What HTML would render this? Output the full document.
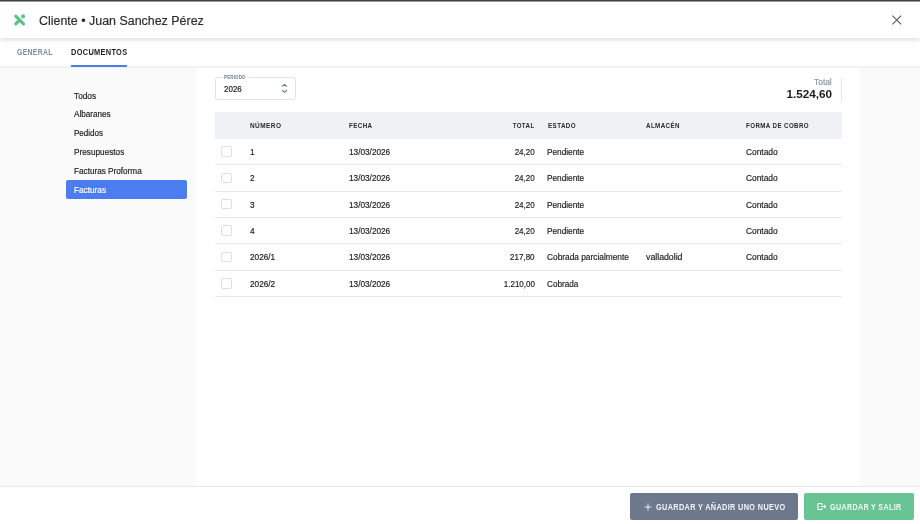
<!DOCTYPE html>
<html lang="es">
<head>
<meta charset="utf-8">
<title>Cliente • Juan Sanchez Pérez</title>
<style>
*{box-sizing:border-box;margin:0;padding:0}
html,body{width:920px;height:524px;overflow:hidden}
body{position:relative;background:#fafafa;font-family:"Liberation Sans",sans-serif;color:#222}
.a,.t{position:absolute;white-space:nowrap}
.t{line-height:1;display:block}
.n{-webkit-text-stroke:.18px currentColor}
#topline{left:0;top:0;width:920px;height:2px;background:linear-gradient(#383838 0,#4a4a4a 45%,#e0e0e0 100%);z-index:10}
#header{left:0;top:0;width:920px;height:38px;background:#fff;box-shadow:0 1px 5px rgba(90,100,120,.28);z-index:5}
#logo{left:13px;top:13px;width:14px;height:14px;z-index:6}
#close{left:890px;top:13px;width:14px;height:14px;z-index:6}
#tabs{left:0;top:38px;width:920px;height:30px;background:#fff;border-bottom:2px solid #f0f1f4;z-index:2}
#tabline{left:71px;top:64.5px;width:55.7px;height:2px;background:#4a7fe9;z-index:3}
#panel{left:196.2px;top:68px;width:664.1px;height:419px;background:#fff}
#sideactive{left:66.2px;top:180px;width:120.8px;height:19px;background:#4b7df0;border-radius:2px}
#sel{left:215.3px;top:77.2px;width:80.5px;height:22.4px;border:1px solid #dfe2e8;border-radius:2.5px;background:#fff}
#sellab{left:222.5px;top:75px;width:25px;height:5px;background:#fff}
#chev{left:280px;top:82px;width:9px;height:13px}
#tdiv{left:841px;top:77px;width:1px;height:25px;background:#e3e6eb}
#thead{left:215.2px;top:112px;width:626.4px;height:26.5px;background:#f0f1f4}
.rl{left:215.2px;width:626.4px;height:1px;background:#e7e9ed}
.cb{left:221.3px;width:10.6px;height:10.6px;border:1px solid #dcdfe5;border-radius:2px;background:#fff}
#footer{left:0;top:486px;width:920px;height:38px;background:#fff;border-top:1px solid #e7e8ea}
#b1{left:630.4px;top:493.1px;width:167.3px;height:26.7px;background:#6d788c;border-radius:2px}
#b2{left:804.1px;top:493px;width:109.8px;height:26.8px;background:#68c492;border-radius:2px}
#plus{left:643px;top:502px;width:10px;height:10px}
#exit{left:816.1px;top:501px;width:12px;height:11px}
</style>
</head>
<body>
<div id="header" class="a"></div>
<div id="topline" class="a"></div>
<svg id="logo" class="a" viewBox="0 0 14 14"><g stroke="#5fc389" stroke-width="3.3" stroke-linecap="round" fill="none"><path d="M2.8 3.2 L10.5 10.9"/><path d="M2.8 10.9 L6.4 7.3"/></g><circle cx="10.1" cy="3.4" r="2.05" fill="#5fc389"/></svg>
<svg id="close" class="a" viewBox="0 0 14 14"><path d="M2.4 2.6 L11.2 11.4 M11.2 2.6 L2.4 11.4" stroke="#5d6779" stroke-width="1.25" fill="none"/></svg>
<div id="tabs" class="a"></div>
<div id="tabline" class="a"></div>
<div id="panel" class="a"></div>
<div id="sideactive" class="a"></div>
<div id="sel" class="a"></div>
<div id="sellab" class="a"></div>
<svg id="chev" class="a" viewBox="0 0 9 13"><path d="M2.3 4.3 L4.5 2.3 L6.7 4.3 M2.3 8.4 L4.5 10.4 L6.7 8.4" stroke="#687690" stroke-width="1.05" fill="none" stroke-linecap="round" stroke-linejoin="round"/></svg>
<div id="tdiv" class="a"></div>
<div id="thead" class="a"></div>
<div class="a rl" style="top:164.1px"></div>
<div class="a rl" style="top:190.5px"></div>
<div class="a rl" style="top:216.8px"></div>
<div class="a rl" style="top:243.2px"></div>
<div class="a rl" style="top:269.5px"></div>
<div class="a rl" style="top:295.9px"></div>
<div class="a cb" style="top:146.2px"></div>
<div class="a cb" style="top:172.55px"></div>
<div class="a cb" style="top:198.9px"></div>
<div class="a cb" style="top:225.25px"></div>
<div class="a cb" style="top:251.6px"></div>
<div class="a cb" style="top:277.95px"></div>
<div id="footer" class="a"></div>
<div id="b1" class="a"></div>
<div id="b2" class="a"></div>
<svg id="plus" class="a" viewBox="0 0 10 10"><path d="M5 1.5 V8.5 M1.5 5 H8.5" stroke="#f4f5f7" stroke-width="0.9" fill="none"/></svg>
<svg id="exit" class="a" viewBox="0 0 12 11"><path d="M6.0 4.0 V3.1 Q6.0 2.5 5.4 2.5 H2.5 Q1.9 2.5 1.9 3.1 V7.9 Q1.9 8.5 2.5 8.5 H5.4 Q6.0 8.5 6.0 7.9 V7.0" stroke="#fbfdfc" stroke-width="1.1" fill="none"/><path d="M4.4 5.5 H9.5 M8.1 4.0 L9.6 5.5 L8.1 7.0" stroke="#fbfdfc" stroke-width="1.1" fill="none"/></svg>
<div id="txt" class="a" style="left:0;top:0;width:920px;height:524px;will-change:transform;z-index:20">
<span class="t n" style="top:14.52px;font-size:12.5px;color:#2b2b2b;left:39.0px;transform-origin:0 0;transform:scaleX(0.9952);">Cliente • Juan Sanchez Pérez</span>
<span class="t" style="top:48.09px;font-size:8.4px;color:#7e8ba1;font-weight:bold;letter-spacing:0.35px;left:16.7px;transform-origin:0 0;transform:scaleX(0.8259);">GENERAL</span>
<span class="t" style="top:48.09px;font-size:8.4px;color:#1f1f1f;font-weight:bold;letter-spacing:0.35px;left:71.1px;transform-origin:0 0;transform:scaleX(0.8842);">DOCUMENTOS</span>
<span class="t n" style="top:91.64px;font-size:8.7px;color:#1c1c1c;left:74.2px;transform-origin:0 0;transform:scaleX(0.9531);">Todos</span>
<span class="t n" style="top:110.44px;font-size:8.7px;color:#1c1c1c;left:74.2px;transform-origin:0 0;transform:scaleX(0.9355);">Albaranes</span>
<span class="t n" style="top:129.24px;font-size:8.7px;color:#1c1c1c;left:74.2px;transform-origin:0 0;transform:scaleX(0.9266);">Pedidos</span>
<span class="t n" style="top:148.04px;font-size:8.7px;color:#1c1c1c;left:74.2px;transform-origin:0 0;transform:scaleX(0.9466);">Presupuestos</span>
<span class="t n" style="top:166.84px;font-size:8.7px;color:#1c1c1c;left:74.2px;transform-origin:0 0;transform:scaleX(0.9411);">Facturas Proforma</span>
<span class="t n" style="top:185.64px;font-size:8.7px;color:#fff;left:74.2px;transform-origin:0 0;transform:scaleX(0.9466);">Facturas</span>
<span class="t" style="top:74.80px;font-size:5.2px;color:#6f7d95;font-weight:bold;letter-spacing:0.15px;left:224px;transform-origin:0 0;transform:scaleX(0.8665);">PERIODO</span>
<span class="t n" style="top:84.59px;font-size:8.4px;color:#1c1c1c;left:223.5px;transform-origin:0 0;transform:scaleX(0.9549);">2026</span>
<span class="t n" style="top:77.79px;font-size:8.4px;color:#8795ab;right:88.7px;transform-origin:100% 0;transform:scaleX(0.9942);">Total</span>
<span class="t" style="top:88.61px;font-size:11.8px;color:#1c1c1c;font-weight:bold;right:88.5px;transform-origin:100% 0;transform:scaleX(0.9908);">1.524,60</span>
<span class="t" style="top:123.16px;font-size:6.9px;color:#2a2a2a;font-weight:bold;letter-spacing:0.45px;left:249.9px;transform-origin:0 0;transform:scaleX(0.9406);">NÚMERO</span>
<span class="t" style="top:123.16px;font-size:6.9px;color:#2a2a2a;font-weight:bold;letter-spacing:0.45px;left:349.2px;transform-origin:0 0;transform:scaleX(0.9025);">FECHA</span>
<span class="t" style="top:123.16px;font-size:6.9px;color:#2a2a2a;font-weight:bold;letter-spacing:0.45px;right:385.3px;transform-origin:100% 0;transform:scaleX(0.8931);">TOTAL</span>
<span class="t" style="top:123.16px;font-size:6.9px;color:#2a2a2a;font-weight:bold;letter-spacing:0.45px;left:547.6px;transform-origin:0 0;transform:scaleX(0.9043);">ESTADO</span>
<span class="t" style="top:123.16px;font-size:6.9px;color:#2a2a2a;font-weight:bold;letter-spacing:0.45px;left:646.3px;transform-origin:0 0;transform:scaleX(0.9027);">ALMACÉN</span>
<span class="t" style="top:123.16px;font-size:6.9px;color:#2a2a2a;font-weight:bold;letter-spacing:0.45px;left:745.7px;transform-origin:0 0;transform:scaleX(0.8961);">FORMA DE COBRO</span>
<span class="t n" style="top:148.04px;font-size:8.7px;color:#1c1c1c;left:250.2px;transform-origin:0 0;transform:scaleX(0.9466);">1</span>
<span class="t n" style="top:148.04px;font-size:8.7px;color:#1c1c1c;left:349.2px;transform-origin:0 0;transform:scaleX(0.9475);">13/03/2026</span>
<span class="t n" style="top:148.04px;font-size:8.7px;color:#1c1c1c;right:385.2px;transform-origin:100% 0;transform:scaleX(0.9241);">24,20</span>
<span class="t n" style="top:148.04px;font-size:8.7px;color:#1c1c1c;left:547.1px;transform-origin:0 0;transform:scaleX(0.9504);">Pendiente</span>
<span class="t n" style="top:148.04px;font-size:8.7px;color:#1c1c1c;left:745.7px;transform-origin:0 0;transform:scaleX(0.9647);">Contado</span>
<span class="t n" style="top:174.39px;font-size:8.7px;color:#1c1c1c;left:250.2px;transform-origin:0 0;transform:scaleX(0.9466);">2</span>
<span class="t n" style="top:174.39px;font-size:8.7px;color:#1c1c1c;left:349.2px;transform-origin:0 0;transform:scaleX(0.9475);">13/03/2026</span>
<span class="t n" style="top:174.39px;font-size:8.7px;color:#1c1c1c;right:385.2px;transform-origin:100% 0;transform:scaleX(0.9241);">24,20</span>
<span class="t n" style="top:174.39px;font-size:8.7px;color:#1c1c1c;left:547.1px;transform-origin:0 0;transform:scaleX(0.9504);">Pendiente</span>
<span class="t n" style="top:174.39px;font-size:8.7px;color:#1c1c1c;left:745.7px;transform-origin:0 0;transform:scaleX(0.9647);">Contado</span>
<span class="t n" style="top:200.74px;font-size:8.7px;color:#1c1c1c;left:250.2px;transform-origin:0 0;transform:scaleX(0.9466);">3</span>
<span class="t n" style="top:200.74px;font-size:8.7px;color:#1c1c1c;left:349.2px;transform-origin:0 0;transform:scaleX(0.9475);">13/03/2026</span>
<span class="t n" style="top:200.74px;font-size:8.7px;color:#1c1c1c;right:385.2px;transform-origin:100% 0;transform:scaleX(0.9241);">24,20</span>
<span class="t n" style="top:200.74px;font-size:8.7px;color:#1c1c1c;left:547.1px;transform-origin:0 0;transform:scaleX(0.9504);">Pendiente</span>
<span class="t n" style="top:200.74px;font-size:8.7px;color:#1c1c1c;left:745.7px;transform-origin:0 0;transform:scaleX(0.9647);">Contado</span>
<span class="t n" style="top:227.09px;font-size:8.7px;color:#1c1c1c;left:250.2px;transform-origin:0 0;transform:scaleX(0.9466);">4</span>
<span class="t n" style="top:227.09px;font-size:8.7px;color:#1c1c1c;left:349.2px;transform-origin:0 0;transform:scaleX(0.9475);">13/03/2026</span>
<span class="t n" style="top:227.09px;font-size:8.7px;color:#1c1c1c;right:385.2px;transform-origin:100% 0;transform:scaleX(0.9241);">24,20</span>
<span class="t n" style="top:227.09px;font-size:8.7px;color:#1c1c1c;left:547.1px;transform-origin:0 0;transform:scaleX(0.9504);">Pendiente</span>
<span class="t n" style="top:227.09px;font-size:8.7px;color:#1c1c1c;left:745.7px;transform-origin:0 0;transform:scaleX(0.9647);">Contado</span>
<span class="t n" style="top:253.44px;font-size:8.7px;color:#1c1c1c;left:250.2px;transform-origin:0 0;transform:scaleX(0.9466);">2026/1</span>
<span class="t n" style="top:253.44px;font-size:8.7px;color:#1c1c1c;left:349.2px;transform-origin:0 0;transform:scaleX(0.9475);">13/03/2026</span>
<span class="t n" style="top:253.44px;font-size:8.7px;color:#1c1c1c;right:385.2px;transform-origin:100% 0;transform:scaleX(0.9218);">217,80</span>
<span class="t n" style="top:253.44px;font-size:8.7px;color:#1c1c1c;left:547.1px;transform-origin:0 0;transform:scaleX(0.9581);">Cobrada parcialmente</span>
<span class="t n" style="top:253.44px;font-size:8.7px;color:#1c1c1c;left:646.2px;transform-origin:0 0;transform:scaleX(1.0073);">valladolid</span>
<span class="t n" style="top:253.44px;font-size:8.7px;color:#1c1c1c;left:745.7px;transform-origin:0 0;transform:scaleX(0.9647);">Contado</span>
<span class="t n" style="top:279.79px;font-size:8.7px;color:#1c1c1c;left:250.2px;transform-origin:0 0;transform:scaleX(0.9466);">2026/2</span>
<span class="t n" style="top:279.79px;font-size:8.7px;color:#1c1c1c;left:349.2px;transform-origin:0 0;transform:scaleX(0.9475);">13/03/2026</span>
<span class="t n" style="top:279.79px;font-size:8.7px;color:#1c1c1c;right:385.2px;transform-origin:100% 0;transform:scaleX(0.9164);">1.210,00</span>
<span class="t n" style="top:279.79px;font-size:8.7px;color:#1c1c1c;left:547.1px;transform-origin:0 0;transform:scaleX(0.9391);">Cobrada</span>
<span class="t" style="top:502.69px;font-size:8.4px;color:#f3f4f6;font-weight:bold;letter-spacing:0.4px;left:656.4px;transform-origin:0 0;transform:scaleX(0.8723);">GUARDAR Y AÑADIR UNO NUEVO</span>
<span class="t" style="top:502.69px;font-size:8.4px;color:#f2f9f5;font-weight:bold;letter-spacing:0.4px;left:830.3px;transform-origin:0 0;transform:scaleX(0.8525);">GUARDAR Y SALIR</span>
</div>
</body>
</html>
